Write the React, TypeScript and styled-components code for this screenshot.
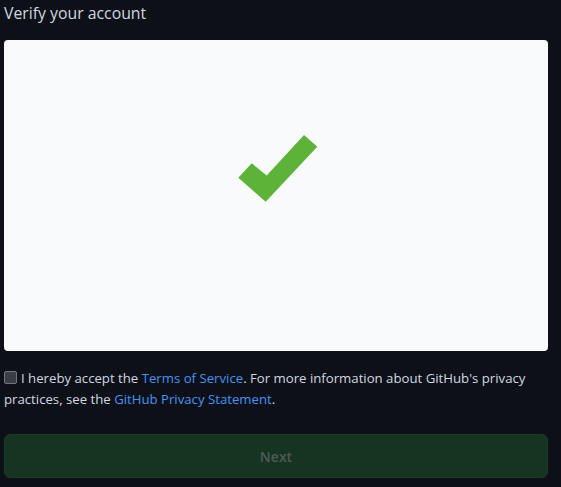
import React from "react";
import styled, { createGlobalStyle } from "styled-components";

const Global = createGlobalStyle`
  html, body { margin: 0; padding: 0; background: #0d1117; }
  body { font-family: "Open Sans", "Noto Sans", sans-serif; }
`;

const Page = styled.div`
  width: 544px;
  padding: 2px 13px 10px 4px;
  display: flex;
  flex-direction: column;
`;

const Title = styled.h1`
  margin: 0;
  font-size: 15.8px;
  font-weight: 400;
  line-height: 22px;
  color: #d1d7e0;
`;

const Panel = styled.div`
  margin-top: 16px;
  height: 311px;
  background: #f9fafc;
  border-radius: 4px;
  display: flex;
  align-items: center;
  justify-content: center;
`;

const Check = styled.svg`
  width: 80px;
  height: 68px;
  margin: 0 0 54px 3px;
`;

const Consent = styled.label`
  margin-top: 17px;
  display: block;
  font-size: 13.2px;
  line-height: 21px;
  color: #d1d7e0;
`;

const Box = styled.span`
  display: inline-block;
  width: 11px;
  height: 11px;
  border: 1px solid #6e7681;
  border-radius: 2px;
  background: #3a3d42;
  vertical-align: -1px;
  margin-right: 4px;
`;

const Link = styled.a`
  color: #4493f8;
  text-decoration: none;
`;

const NextButton = styled.button`
  margin-top: 24px;
  height: 44px;
  width: 100%;
  border: 1px solid #1c3a27;
  border-radius: 6px;
  background: #173322;
  color: #4b5d52;
  font-family: inherit;
  font-size: 14px;
  font-weight: 600;
`;

export default function App() {
  return (
    <>
      <Global />
      <Page>
        <Title>Verify your account</Title>
        <Panel>
          <Check viewBox="238 135 80 68">
            <polygon
              points="238.3,177.7 251.7,163.3 266.7,175.5 304,135 317.3,146.7 265.7,201.7"
              fill="#5cb338"
            />
          </Check>
        </Panel>
        <Consent>
          <Box />I hereby accept the <Link href="#">Terms of Service</Link>. For more information about GitHub's privacy practices, see the <Link href="#">GitHub Privacy Statement</Link>.
        </Consent>
        <NextButton disabled>Next</NextButton>
      </Page>
    </>
  );
}
